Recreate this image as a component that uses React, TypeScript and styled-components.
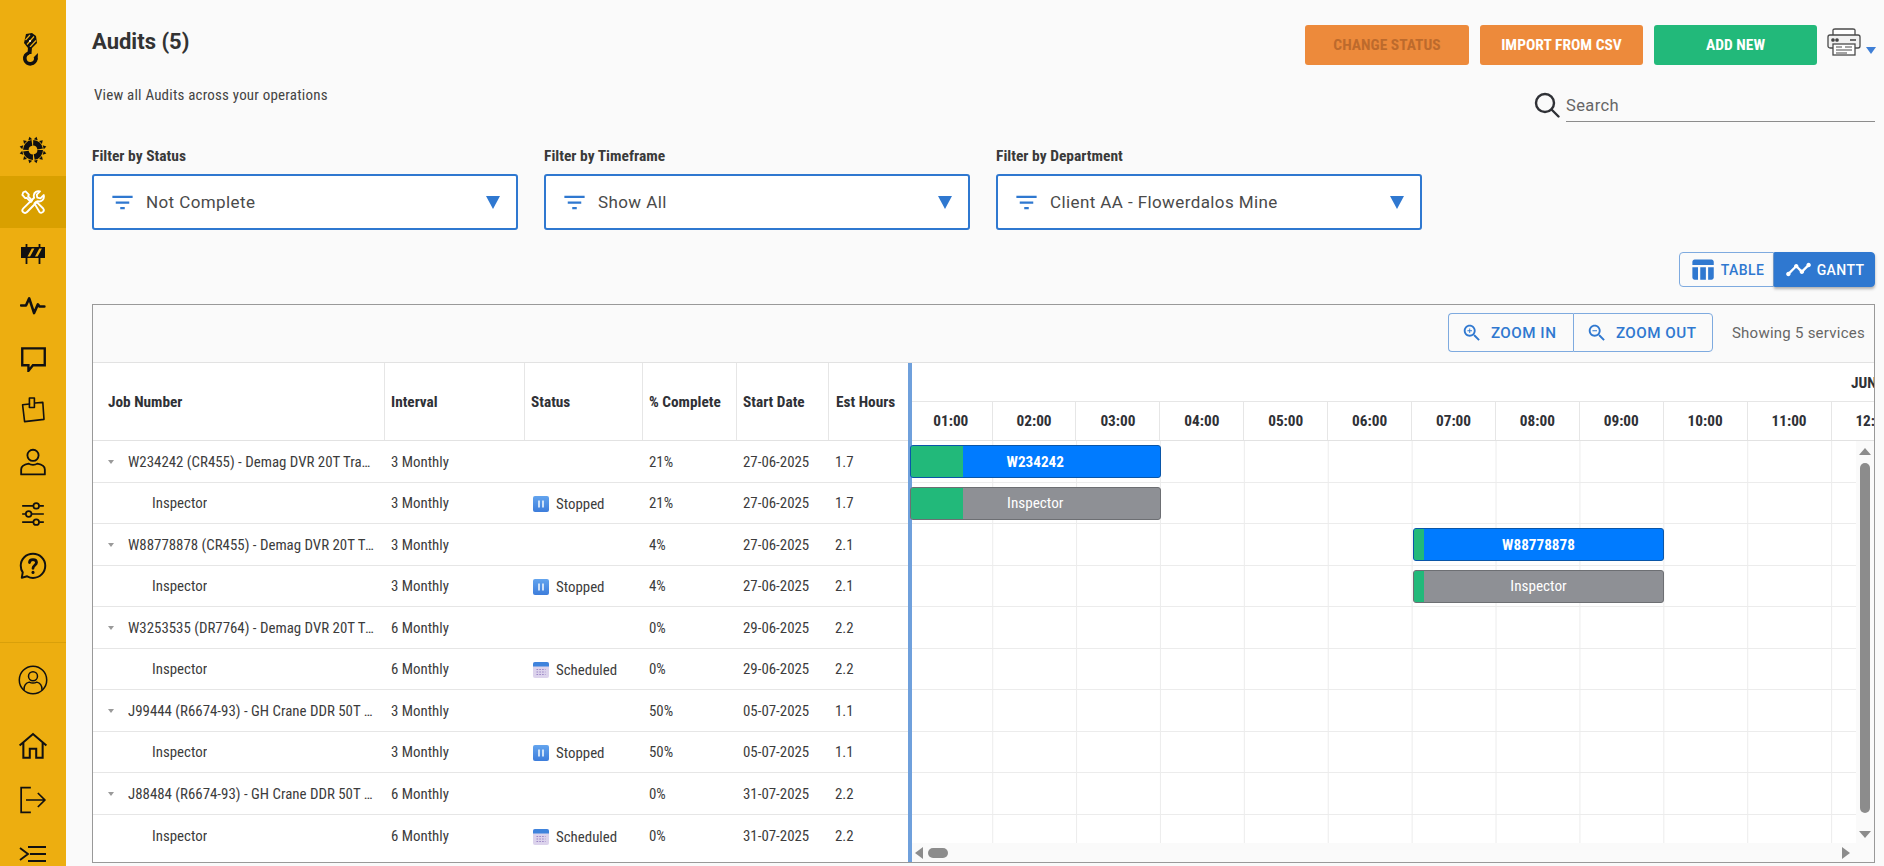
import React from 'react'
import styled, { createGlobalStyle } from 'styled-components'

const GlobalStyle = createGlobalStyle`
  html, body { margin: 0; padding: 0; height: 100%; background: #fafafa; }
  body { font-family: Roboto, "Liberation Sans", sans-serif; color: #333; overflow: hidden; }
  * { box-sizing: border-box; }
`

const narrow = `font-family: "Roboto Condensed", Roboto, "Liberation Sans", sans-serif; font-stretch: 75%;`

type Row = { job: string, interval: string, status?: 'Stopped' | 'Scheduled', pct: string, start: string, hours: string, child?: boolean }

const rows: Row[] = [
  { job: 'W234242 (CR455) - Demag DVR 20T Travelling Crane', interval: '3 Monthly', pct: '21%', start: '27-06-2025', hours: '1.7' },
  { job: 'Inspector', interval: '3 Monthly', status: 'Stopped', pct: '21%', start: '27-06-2025', hours: '1.7', child: true },
  { job: 'W88778878 (CR455) - Demag DVR 20T Travelling Crane', interval: '3 Monthly', pct: '4%', start: '27-06-2025', hours: '2.1' },
  { job: 'Inspector', interval: '3 Monthly', status: 'Stopped', pct: '4%', start: '27-06-2025', hours: '2.1', child: true },
  { job: 'W3253535 (DR7764) - Demag DVR 20T Travelling Crane', interval: '6 Monthly', pct: '0%', start: '29-06-2025', hours: '2.2' },
  { job: 'Inspector', interval: '6 Monthly', status: 'Scheduled', pct: '0%', start: '29-06-2025', hours: '2.2', child: true },
  { job: 'J99444 (R6674-93) - GH Crane DDR 50T Overhead', interval: '3 Monthly', pct: '50%', start: '05-07-2025', hours: '1.1' },
  { job: 'Inspector', interval: '3 Monthly', status: 'Stopped', pct: '50%', start: '05-07-2025', hours: '1.1', child: true },
  { job: 'J88484 (R6674-93) - GH Crane DDR 50T Overhead', interval: '6 Monthly', pct: '0%', start: '31-07-2025', hours: '2.2' },
  { job: 'Inspector', interval: '6 Monthly', status: 'Scheduled', pct: '0%', start: '31-07-2025', hours: '2.2', child: true },
]

const hours = ['01:00', '02:00', '03:00', '04:00', '05:00', '06:00', '07:00', '08:00', '09:00', '10:00', '11:00', '12:00']

type BarData = { row: number, label: string, left: number, width: number, progress: number, parent: boolean }

const bars: BarData[] = [
  { row: 0, label: 'W234242', left: 1.5, width: 251.5, progress: 21, parent: true },
  { row: 1, label: 'Inspector', left: 1.5, width: 251.5, progress: 21, parent: false },
  { row: 2, label: 'W88778878', left: 505, width: 251, progress: 4, parent: true },
  { row: 3, label: 'Inspector', left: 505, width: 251, progress: 4, parent: false },
]

function Svg({ size = 28, children, view = '0 0 24 24', sw = 1.8 }: { size?: number, children: React.ReactNode, view?: string, sw?: number }) {
  return (
    <svg width={size} height={size} viewBox={view} fill="none" stroke="#111" strokeWidth={sw} strokeLinecap="round" strokeLinejoin="round">
      {children}
    </svg>
  )
}

function HookLogo() {
  return (
    <svg width="16" height="34" viewBox="0 0 16 34">
      <path d="M4 1 L10 0 L14 3 L15 10 L10 15 L6 15 L2 10 Z" fill="#111" />
      <path d="M3.5 7 L8 2 M5 11.5 L12 3.5 M8 14 L14 7.5" stroke="#edae10" strokeWidth="1.2" />
      <circle cx="8" cy="8" r="1" fill="#fff" />
      <path d="M6 14 L10 14 L9.5 21 L5.5 21 Z" fill="#111" />
      <path d="M7 20 A5.5 5.5 0 1 0 13.8 25" stroke="#111" strokeWidth="3.6" fill="none" />
      <path d="M11.5 24.5 L16 20 L15.6 27 Z" fill="#111" />
    </svg>
  )
}

function Gauge() {
  return (
    <svg width="28" height="28" viewBox="0 0 28 28" fill="none">
      <circle cx="14" cy="14" r="7.2" stroke="#111" strokeWidth="5.6" strokeDasharray="10 1.3" />
      <g fill="#111">
        {[0, 30, 60, 90, 120, 150, 180, 210, 240, 270, 300, 330].map(a => (
          <path key={a} d="M14 0.2 L16 3.4 L12 3.4 Z" transform={`rotate(${a + 15} 14 14)`} />
        ))}
      </g>
    </svg>
  )
}

function Tools() {
  return (
    <svg width="26" height="26" viewBox="0 0 28 28" fill="none" stroke="#fff" strokeWidth="2" strokeLinejoin="round" strokeLinecap="round">
      <path d="M3.5 3.5 L6 2.5 L9.5 6 L8.8 8 L13 12.3 L11.8 14 L7.2 9.6 L5.6 9.8 L2.5 6.4 Z" />
      <path d="M15.5 15.5 L17.5 13.5 L25 21 C26 22.2 25.8 23.6 24.8 24.7 C23.6 25.8 22 25.9 21 24.8 Z" />
      <path d="M25.5 6.5 L22 10 L18.6 9.2 L18 6 L21.5 2.6 C18.6 1.6 15 3.4 14.8 7 C14.8 8 15 8.6 15.2 9.4 L3.6 20.8 C2.2 22.2 2.4 24 3.4 25 C4.6 26.2 6.4 26 7.6 24.8 L19 13.2 C23 14.2 26.8 11 25.5 6.5 Z" />
    </svg>
  )
}

function Barrier() {
  return (
    <svg width="26" height="20" viewBox="0 0 26 20">
      <path d="M6.5 0 V20 M19.5 0 V20" stroke="#111" strokeWidth="1.8" />
      <rect x="1" y="3" width="24" height="11" fill="#111" />
      <path d="M7.5 12.6 L11.8 4.4 H14.4 L10.1 12.6 Z M15 12.6 L19.3 4.4 H21.9 L17.6 12.6 Z" fill="#edae10" />
    </svg>
  )
}

function Pulse() {
  return (
    <Svg size={26} view="0 0 24 20" sw={2.4}>
      <path d="M1 9.5 H5.5 L8.5 3 L13 16.5 L16.5 8.5 L18 10.5 H22.5" />
    </Svg>
  )
}

function Chat() {
  return (
    <Svg size={27} view="0 0 24 24" sw={2.1}>
      <path d="M2 3 H22 V18 H11.5 L7.5 23 V18 H2 Z" strokeLinejoin="miter" />
    </Svg>
  )
}

function Note() {
  return (
    <Svg size={26} view="0 0 24 26" sw={1.6}>
      <path d="M8.5 7 L1.6 7.8 L3.6 24.6 L23 22.4 L21.8 5.4 L14 6" />
      <rect x="8.4" y="1" width="5" height="9.5" />
    </Svg>
  )
}

function Person() {
  return (
    <Svg size={28} view="0 0 26 26" sw={1.7}>
      <circle cx="13" cy="6.8" r="5.2" />
      <path d="M2 24.5 V20 C2 16 6 15 9 14.5 C11 16 15 16 17 14.5 C20 15 24 16 24 20 V24.5 Z" />
    </Svg>
  )
}

function Sliders() {
  return (
    <Svg size={26} view="0 0 24 24" sw={1.6}>
      <path d="M2 4.5 H12 M18 4.5 H22 M2 12 H5 M11 12 H22 M2 19.5 H12 M18 19.5 H22" strokeLinecap="butt" />
      <circle cx="15" cy="4.5" r="2.6" />
      <circle cx="8" cy="12" r="2.6" />
      <circle cx="15" cy="19.5" r="2.6" />
    </Svg>
  )
}

function Help() {
  return (
    <Svg size={28} view="0 0 24 24" sw={1.7}>
      <path d="M12 1.5 C6 1.5 1.5 6 1.5 11.8 C1.5 14 2.2 16 3.2 17.4 L2.4 22 L7 20.8 C8.5 21.6 10.2 22.2 12 22.2 C17.8 22.2 22.5 17.6 22.5 11.8 C22.5 6 17.8 1.5 12 1.5 Z" />
      <path d="M9 9 C9 5.6 15 5.6 15 9 C15 11.4 12 11.4 12 14" strokeWidth="2.4" />
      <path d="M12 17.4 V17.6" strokeWidth="2.6" />
    </Svg>
  )
}

function Profile() {
  return (
    <Svg size={30} view="0 0 28 28" sw={1.4}>
      <circle cx="14" cy="14" r="12.8" />
      <circle cx="14" cy="10.5" r="4.2" />
      <path d="M5.6 23 C5.6 19 8 16.6 10.5 16 C12.5 17 15.5 17 17.5 16 C20 16.6 22.4 19 22.4 23" />
    </Svg>
  )
}

function Home() {
  return (
    <Svg size={30} view="0 0 28 26" sw={1.9}>
      <path d="M1.5 12.5 L14 1.8 L26.5 12.5 M5 10 V24 H11 V15.5 H17 V24 H23 V10" strokeLinejoin="miter" strokeLinecap="butt" />
    </Svg>
  )
}

function Logout() {
  return (
    <Svg size={28} view="0 0 26 26" sw={1.6}>
      <path d="M11 1.5 H2 V24.5 H11 M6.5 13 H24 M17.5 6.5 L24 13 L17.5 19.5" strokeLinecap="butt" strokeLinejoin="miter" />
    </Svg>
  )
}

function MenuIcon() {
  return (
    <Svg size={28} view="0 0 28 18" sw={1.9}>
      <path d="M9 2 H27 M11 9 H27 M9 16 H27 M1 3 L9 9 L1 15" strokeLinecap="butt" strokeLinejoin="miter" />
    </Svg>
  )
}

function PrinterIcon() {
  return (
    <svg width="34" height="28" viewBox="0 0 34 28" fill="none" stroke="#4a4a4a" strokeWidth="1.3">
      <path d="M6 7 V2 C6 1 7 1 8 1 H26 C27 1 28 1 28 2 V7" fill="#fff" />
      <rect x="1" y="7" width="32" height="13" rx="2" fill="#f2f2f2" />
      <circle cx="6" cy="12" r="1.2" fill="#333" />
      <circle cx="10" cy="12" r="1.2" fill="#333" />
      <path d="M23 12 H29" strokeWidth="1.6" />
      <rect x="6" y="16" width="22" height="11" fill="#fff" />
      <path d="M9 19 H15 M18 19 H25 M9 22 H25 M9 25 H20" strokeWidth="1.1" />
    </svg>
  )
}

function MuiIcon({ d, size = 24, color = 'currentColor' }: { d: string, size?: number, color?: string }) {
  return (
    <svg width={size} height={size} viewBox="0 0 24 24" fill={color} style={{ flex: 'none' }}><path d={d} /></svg>
  )
}

const icons = {
  filter: 'M10 18h4v-2h-4v2zM3 6v2h18V6H3zm3 7h12v-2H6v2z',
  table: 'M10 10.02h5V21h-5zM17 21h3c1.1 0 2-.9 2-2v-9h-5v11zm3-18H5c-1.1 0-2 .9-2 2v3h19V5c0-1.1-.9-2-2-2zM3 19c0 1.1.9 2 2 2h3V10H3v9z',
  timeline: 'M23 8c0 1.1-.9 2-2 2-.18 0-.35-.02-.51-.07l-3.56 3.55c.05.16.07.34.07.52 0 1.1-.9 2-2 2s-2-.9-2-2c0-.18.02-.36.07-.52l-2.55-2.55c-.16.05-.34.07-.52.07s-.36-.02-.52-.07l-4.55 4.56c.05.16.07.33.07.51 0 1.1-.9 2-2 2s-2-.9-2-2 .9-2 2-2c.18 0 .35.02.51.07l4.56-4.55C8.02 9.36 8 9.18 8 9c0-1.1.9-2 2-2s2 .9 2 2c0 .18-.02.36-.07.52l2.55 2.55c.16-.05.34-.07.52-.07s.36.02.52.07l3.55-3.56C19.02 8.35 19 8.18 19 8c0-1.1.9-2 2-2s2 .9 2 2z',
  zoomIn: 'M15.5 14h-.79l-.28-.27C15.41 12.59 16 11.11 16 9.5 16 5.91 13.09 3 9.5 3S3 5.91 3 9.5 5.91 16 9.5 16c1.61 0 3.09-.59 4.23-1.57l.27.28v.79l5 4.99L20.49 19l-4.99-5zm-6 0C7.01 14 5 11.99 5 9.5S7.01 5 9.5 5 14 7.01 14 9.5 11.99 14 9.5 14zM12 10h-2v2H9v-2H7V9h2V7h1v2h2v1z',
  zoomOut: 'M15.5 14h-.79l-.28-.27C15.41 12.59 16 11.11 16 9.5 16 5.91 13.09 3 9.5 3S3 5.91 3 9.5 5.91 16 9.5 16c1.61 0 3.09-.59 4.23-1.57l.27.28v.79l5 4.99L20.49 19l-4.99-5zm-6 0C7.01 14 5 11.99 5 9.5S7.01 5 9.5 5 14 7.01 14 9.5 11.99 14 9.5 14zM7 9h5v1H7z',
}

function StatusIcon({ status }: { status: 'Stopped' | 'Scheduled' }) {
  if (status === 'Stopped') {
    return (
      <svg width="16" height="16" viewBox="0 0 16 16">
        <defs>
          <linearGradient id="stopped" x1="0" y1="0" x2="0" y2="1">
            <stop offset="0" stopColor="#63a4ee" />
            <stop offset="1" stopColor="#3d7ddb" />
          </linearGradient>
        </defs>
        <rect width="16" height="16" rx="2" fill="url(#stopped)" />
        <path d="M6 4.5 V11.5 M10 4.5 V11.5" stroke="#e6f0fb" strokeWidth="1.7" />
      </svg>
    )
  }
  return (
    <svg width="16" height="16" viewBox="0 0 16 16">
      <rect width="16" height="16" rx="2" fill="#dcd3ec" />
      <path d="M0 2 a2 2 0 0 1 2-2 H14 a2 2 0 0 1 2 2 V4.5 H0 Z" fill="#3f83dc" />
      <path d="M3.5 7.5 H12.5 M3.5 10 H12.5 M3.5 12.5 H12.5" stroke="#9b86c6" strokeWidth="1.2" strokeDasharray="1.6 1.2" />
    </svg>
  )
}

function Select({ value }: { value: string }) {
  return (
    <SelectBox>
      <FilterIconWrap><MuiIcon d={icons.filter} size={27} /></FilterIconWrap>
      <SelectValue>{value}</SelectValue>
      <Caret />
    </SelectBox>
  )
}

export default function App() {
  return (
    <Page>
      <GlobalStyle />
      <Sidebar>
        <LogoSlot><HookLogo /></LogoSlot>
        <NavGroup>
          <NavItem><Gauge /></NavItem>
          <NavItem $active><Tools /></NavItem>
          <NavItem><Barrier /></NavItem>
          <NavItem><Pulse /></NavItem>
          <NavItem><Chat /></NavItem>
          <NavItem><Note /></NavItem>
          <NavItem><Person /></NavItem>
          <NavItem><Sliders /></NavItem>
          <NavItem><Help /></NavItem>
        </NavGroup>
        <BottomGroup>
          <NavItem><Profile /></NavItem>
          <HomeItem><Home /></HomeItem>
          <BottomItem><Logout /></BottomItem>
          <BottomItem><MenuIcon /></BottomItem>
        </BottomGroup>
      </Sidebar>

      <Main>
        <TopRow>
          <Heading>
            <Title>Audits (5)</Title>
            <Subtitle>View all Audits across your operations</Subtitle>
          </Heading>
          <Actions>
            <ButtonRow>
              <ActionButton $bg="#ed8a3b" $w={164} $disabled>CHANGE STATUS</ActionButton>
              <ActionButton $bg="#ed8a3b" $w={163}>IMPORT FROM CSV</ActionButton>
              <ActionButton $bg="#22b97a" $w={163}>ADD NEW</ActionButton>
              <PrinterSlot>
                <PrinterIcon />
                <SmallCaret />
              </PrinterSlot>
            </ButtonRow>
            <SearchRow>
              <svg width="26" height="26" viewBox="0 0 26 26" fill="none" stroke="#2f3136" strokeWidth="2.4" strokeLinecap="round">
                <circle cx="11" cy="11" r="9" />
                <path d="M17.5 17.5 L24.5 24.5" />
              </svg>
              <SearchField>Search</SearchField>
            </SearchRow>
          </Actions>
        </TopRow>

        <Filters>
          <FilterCol>
            <FilterLabel>Filter by Status</FilterLabel>
            <Select value="Not Complete" />
          </FilterCol>
          <FilterCol>
            <FilterLabel>Filter by Timeframe</FilterLabel>
            <Select value="Show All" />
          </FilterCol>
          <FilterCol>
            <FilterLabel>Filter by Department</FilterLabel>
            <Select value="Client AA - Flowerdalos Mine" />
          </FilterCol>
        </Filters>

        <ToggleRow>
          <ToggleGroup>
            <ToggleButton><MuiIcon d={icons.table} size={27} />TABLE</ToggleButton>
            <ToggleButton $active><MuiIcon d={icons.timeline} size={27} />GANTT</ToggleButton>
          </ToggleGroup>
        </ToggleRow>

        <GanttBox>
          <Toolbar>
            <ZoomGroup>
              <ZoomButton $w={125}><MuiIcon d={icons.zoomIn} size={22} />ZOOM IN</ZoomButton>
              <ZoomButton $w={140}><MuiIcon d={icons.zoomOut} size={22} />ZOOM OUT</ZoomButton>
            </ZoomGroup>
            <Showing>Showing 5 services</Showing>
          </Toolbar>
          <Split>
            <TablePane>
              <HeadRow>
                <HeadCell>Job Number</HeadCell>
                <HeadCell>Interval</HeadCell>
                <HeadCell>Status</HeadCell>
                <HeadCell>% Complete</HeadCell>
                <HeadCell>Start Date</HeadCell>
                <HeadCell $last>Est Hours</HeadCell>
              </HeadRow>
              {rows.map((r, i) => (
                <BodyRow key={i}>
                  <JobCell $child={r.child}>
                    {!r.child && <TreeCaret />}
                    <JobText>{r.job}</JobText>
                  </JobCell>
                  <Cell>{r.interval}</Cell>
                  <StatusCell>
                    {r.status && <><StatusIcon status={r.status} /><span>{r.status}</span></>}
                  </StatusCell>
                  <Cell>{r.pct}</Cell>
                  <Cell>{r.start}</Cell>
                  <Cell>{r.hours}</Cell>
                </BodyRow>
              ))}
            </TablePane>

            <TimelinePane>
              <Splitter />
              <MonthRow><MonthLabel>JUN</MonthLabel></MonthRow>
              <HourRow>
                {hours.map((h, i) => <HourCell key={h} $first={i === 0}>{h}</HourCell>)}
              </HourRow>
              <TimelineMiddle>
                <TimelineRows>
                  {rows.map((_, i) => (
                    <TimelineRow key={i}>
                      {bars.filter(b => b.row === i).map(b => (
                        <Bar key={b.row} $parent={b.parent} style={{ left: b.left, width: b.width }}>
                          <Progress style={{ width: `${b.progress}%` }} />
                          <BarLabel $parent={b.parent}>{b.label}</BarLabel>
                        </Bar>
                      ))}
                    </TimelineRow>
                  ))}
                </TimelineRows>
                <VScroll>
                  <ArrowUp />
                  <VThumb />
                  <ArrowDown />
                </VScroll>
              </TimelineMiddle>
              <HScroll>
                <ArrowLeft />
                <HThumb />
                <ArrowRight />
              </HScroll>
            </TimelinePane>
          </Split>
        </GanttBox>
      </Main>
    </Page>
  )
}

const Page = styled.div`
  display: flex;
  width: 1884px;
  height: 866px;
  background: #fafafa;
  overflow: hidden;
`

const Sidebar = styled.nav`
  width: 66px;
  flex: none;
  background: #edae10;
  display: flex;
  flex-direction: column;
  overflow: hidden;
`

const LogoSlot = styled.div`
  height: 124px;
  flex: none;
  display: flex;
  justify-content: center;
  padding-top: 33px;
  padding-right: 6px;
`

const NavGroup = styled.div`
  height: 518px;
  flex: none;
  display: flex;
  flex-direction: column;
`

const NavItem = styled.div<{ $active?: boolean }>`
  height: 52px;
  flex: none;
  display: flex;
  align-items: center;
  justify-content: center;
  background: ${p => p.$active ? '#d9a000' : 'transparent'};
`

const BottomGroup = styled.div`
  flex: none;
  border-top: 1px solid #d9a00a;
  padding-top: 11px;
  display: flex;
  flex-direction: column;
`

const HomeItem = styled(NavItem)`
  margin-top: 14px;
`

const BottomItem = styled(NavItem)`
  margin-top: 2px;
`

const Main = styled.main`
  flex: 1;
  min-width: 0;
  padding: 0 9px 0 26px;
  display: flex;
  flex-direction: column;
`

const TopRow = styled.div`
  height: 141px;
  display: flex;
  justify-content: space-between;
`

const Heading = styled.div`
  padding-top: 29px;
`

const Title = styled.h1`
  margin: 0;
  font-size: 22px;
  line-height: 26px;
  font-weight: 700;
  color: #333;
`

const Subtitle = styled.div`
  ${narrow}
  margin: 31px 0 0 2px;
  font-size: 15px;
  line-height: 18px;
  color: #444;
  letter-spacing: 0.2px;
`

const Actions = styled.div`
  display: flex;
  flex-direction: column;
  align-items: flex-end;
  padding-top: 25px;
`

const ButtonRow = styled.div`
  display: flex;
  align-items: flex-start;
  gap: 11px;
`

const ActionButton = styled.div<{ $bg: string, $w: number, $disabled?: boolean }>`
  ${narrow}
  width: ${p => p.$w}px;
  height: 40px;
  border-radius: 3px;
  background: ${p => p.$bg};
  color: ${p => p.$disabled ? '#bd6a2c' : '#fff'};
  display: flex;
  align-items: center;
  justify-content: center;
  font-size: 15.5px;
  font-weight: 700;
`

const PrinterSlot = styled.div`
  position: relative;
  width: 48px;
  height: 40px;
  margin-left: -1px;
  padding-top: 3px;
`

const SmallCaret = styled.span`
  position: absolute;
  right: -1px;
  top: 22px;
  width: 0;
  height: 0;
  border-left: 5px solid transparent;
  border-right: 5px solid transparent;
  border-top: 7px solid #3f7fd6;
`

const SearchRow = styled.div`
  margin-top: 27px;
  display: flex;
  align-items: flex-start;
  gap: 6px;
`

const SearchField = styled.div`
  width: 309px;
  height: 30px;
  border-bottom: 1px solid #8c8c8c;
  font-size: 16.5px;
  line-height: 28px;
  color: #666;
  letter-spacing: 0.4px;
`

const Filters = styled.div`
  display: flex;
  gap: 26px;
`

const FilterCol = styled.div`
  width: 426px;
`

const FilterLabel = styled.div`
  ${narrow}
  font-size: 15.5px;
  font-weight: 700;
  line-height: 18px;
  height: 33px;
  padding-top: 6px;
  color: #3a3a3a;
`

const SelectBox = styled.div`
  height: 56px;
  border: 2px solid #2f78d0;
  border-radius: 3px;
  background: #fff;
  display: flex;
  align-items: center;
  padding: 0 16px 0 15px;
  color: #2f78d0;
`

const FilterIconWrap = styled.span`
  display: flex;
  margin-right: 10px;
`

const SelectValue = styled.span`
  flex: 1;
  font-size: 17px;
  color: #4a4a4a;
  letter-spacing: 0.4px;
`

const Caret = styled.span`
  width: 0;
  height: 0;
  border-left: 7px solid transparent;
  border-right: 7px solid transparent;
  border-top: 13px solid #2f78d0;
`

const ToggleRow = styled.div`
  height: 74px;
  padding-top: 22px;
  display: flex;
  justify-content: flex-end;
`

const ToggleGroup = styled.div`
  display: flex;
  height: 35px;
`

const ToggleButton = styled.div<{ $active?: boolean }>`
  width: ${p => p.$active ? '101px' : '95px'};
  display: flex;
  align-items: center;
  justify-content: center;
  gap: 5px;
  font-size: 14px;
  font-weight: 500;
  letter-spacing: 0.4px;
  color: ${p => p.$active ? '#fff' : '#2f78d0'};
  background: ${p => p.$active ? '#2f78d0' : 'transparent'};
  border: 1px solid ${p => p.$active ? '#2f78d0' : '#7eaadf'};
  border-radius: ${p => p.$active ? '0 4px 4px 0' : '4px 0 0 4px'};
  box-shadow: ${p => p.$active ? '0 2px 3px rgba(0,0,0,0.3)' : 'none'};
`

const GanttBox = styled.section`
  width: 1783px;
  height: 559px;
  border: 1px solid #999;
  display: flex;
  flex-direction: column;
  overflow: hidden;
`

const Toolbar = styled.div`
  height: 58px;
  flex: none;
  background: #fafafa;
  border-bottom: 1px solid #e2e2e2;
  display: flex;
  align-items: center;
  justify-content: flex-end;
  padding: 0 9px 2px 0;
`

const ZoomGroup = styled.div`
  display: flex;
  height: 39px;
`

const ZoomButton = styled.div<{ $w: number }>`
  width: ${p => p.$w}px;
  display: flex;
  align-items: center;
  padding-left: 12px;
  gap: 8px;
  border: 1px solid #7eaadf;
  color: #2f78d0;
  font-size: 15.2px;
  font-weight: 500;
  letter-spacing: 0.5px;
  &:first-child { border-radius: 4px 0 0 4px; border-right: none; }
  &:last-child { border-radius: 0 4px 4px 0; }
`

const Showing = styled.div`
  margin-left: 19px;
  font-size: 15px;
  color: #666;
  letter-spacing: 0.25px;
`

const Split = styled.div`
  flex: 1;
  display: flex;
  min-height: 0;
  background: #fff;
`

const columns = '292px 140px 118px 94px 92px 79px'

const TablePane = styled.div`
  width: 815px;
  flex: none;
  background: #fff;
`

const HeadRow = styled.div`
  display: grid;
  grid-template-columns: ${columns};
  height: 78px;
  border-bottom: 1px solid #e2e2e2;
`

const HeadCell = styled.div<{ $last?: boolean }>`
  ${narrow}
  display: flex;
  align-items: center;
  padding-left: ${p => p.$last ? '7px' : '6px'};
  &:first-child { padding-left: 15px; }
  border-right: ${p => p.$last ? 'none' : '1px solid #e6e6e6'};
  font-size: 15.3px;
  font-weight: 700;
  color: #2f3136;
`

const BodyRow = styled.div`
  display: grid;
  grid-template-columns: ${columns};
  height: 41.5px;
  border-bottom: 1px solid #e6e6e6;
  &:last-child { border-bottom: none; }
`

const Cell = styled.div`
  ${narrow}
  display: flex;
  align-items: center;
  padding-left: 6px;
  padding-top: 1px;
  font-size: 14.9px;
  color: #3c3c3c;
  min-width: 0;
`

const JobCell = styled(Cell)<{ $child?: boolean }>`
  padding-left: ${p => p.$child ? '59px' : '15px'};
  padding-right: 11px;
`

const JobText = styled.span`
  overflow: hidden;
  white-space: nowrap;
  text-overflow: ellipsis;
`

const TreeCaret = styled.span`
  flex: none;
  width: 0;
  height: 0;
  margin-right: 14px;
  border-left: 3.5px solid transparent;
  border-right: 3.5px solid transparent;
  border-top: 4px solid #9a9a9a;
`

const StatusCell = styled(Cell)`
  padding-left: 8px;
  padding-top: 3px;
  gap: 7px;
`

const TimelinePane = styled.div`
  flex: 1;
  min-width: 0;
  position: relative;
  display: flex;
  flex-direction: column;
  overflow: hidden;
`

const Splitter = styled.div`
  position: absolute;
  left: 0;
  top: 0;
  bottom: 0;
  width: 3.5px;
  background: #6fa0dc;
  z-index: 1;
`

const MonthRow = styled.div`
  height: 39px;
  flex: none;
  border-bottom: 1px solid #e6e6e6;
  position: relative;
`

const MonthLabel = styled.span`
  ${narrow}
  position: absolute;
  left: 943px;
  top: 11px;
  font-size: 15.3px;
  font-weight: 700;
  color: #2f3136;
  white-space: nowrap;
`

const HourRow = styled.div`
  height: 39px;
  flex: none;
  display: flex;
  border-bottom: 1px solid #e2e2e2;
`

const HourCell = styled.div<{ $first?: boolean }>`
  ${narrow}
  flex: none;
  width: ${p => p.$first ? '84.6px' : '83.9px'};
  padding-left: ${p => p.$first ? '2px' : '0'};
  border-right: 1px solid #e6e6e6;
  display: flex;
  align-items: center;
  justify-content: center;
  font-size: 15.3px;
  font-weight: 700;
  color: #2f3136;
`

const TimelineMiddle = styled.div`
  flex: 1;
  min-height: 0;
  display: flex;
`

const TimelineRows = styled.div`
  flex: 1;
  min-width: 0;
  position: relative;
  overflow: hidden;
  background-image: linear-gradient(to right, #ececec 1px, transparent 1px);
  background-size: 83.9px 100%;
  background-position: 84.2px 0;
`

const TimelineRow = styled.div`
  position: relative;
  height: 41.5px;
  border-bottom: 1px solid #ececec;
`

const Bar = styled.div<{ $parent: boolean }>`
  position: absolute;
  top: 4px;
  height: 33px;
  border-radius: 3px;
  overflow: hidden;
  z-index: 2;
  display: flex;
  align-items: center;
  justify-content: center;
  background: ${p => p.$parent ? '#007bff' : '#8e9095'};
  border: 1px solid ${p => p.$parent ? '#0a56a8' : '#6d6f73'};
`

const Progress = styled.div`
  position: absolute;
  left: 0;
  top: 0;
  bottom: 0;
  background: #22b97a;
`

const BarLabel = styled.span<{ $parent: boolean }>`
  ${narrow}
  position: relative;
  color: #fff;
  font-size: 15.2px;
  font-weight: ${p => p.$parent ? 700 : 400};
`

const VScroll = styled.div`
  width: 18px;
  flex: none;
  background: #fafafa;
  display: flex;
  flex-direction: column;
  align-items: center;
  padding-top: 7px;
`

const VThumb = styled.div`
  width: 10px;
  height: 350px;
  margin-top: 8px;
  background: #8c8c8c;
  border-radius: 5px;
`

const HScroll = styled.div`
  height: 19px;
  flex: none;
  background: #fafafa;
  display: flex;
  align-items: center;
  padding: 0 24px 0 7px;
`

const HThumb = styled.div`
  width: 20px;
  height: 10px;
  margin-left: 5px;
  background: #8c8c8c;
  border-radius: 5px;
`

const ArrowUp = styled.span`
  flex: none;
  border-left: 6px solid transparent;
  border-right: 6px solid transparent;
  border-bottom: 7px solid #8c8c8c;
`

const ArrowDown = styled.span`
  flex: none;
  margin-top: 18px;
  border-left: 6px solid transparent;
  border-right: 6px solid transparent;
  border-top: 7px solid #8c8c8c;
`

const ArrowLeft = styled.span`
  flex: none;
  border-top: 6px solid transparent;
  border-bottom: 6px solid transparent;
  border-right: 8px solid #8c8c8c;
`

const ArrowRight = styled.span`
  flex: none;
  margin-left: auto;
  border-top: 6px solid transparent;
  border-bottom: 6px solid transparent;
  border-left: 8px solid #8c8c8c;
`
